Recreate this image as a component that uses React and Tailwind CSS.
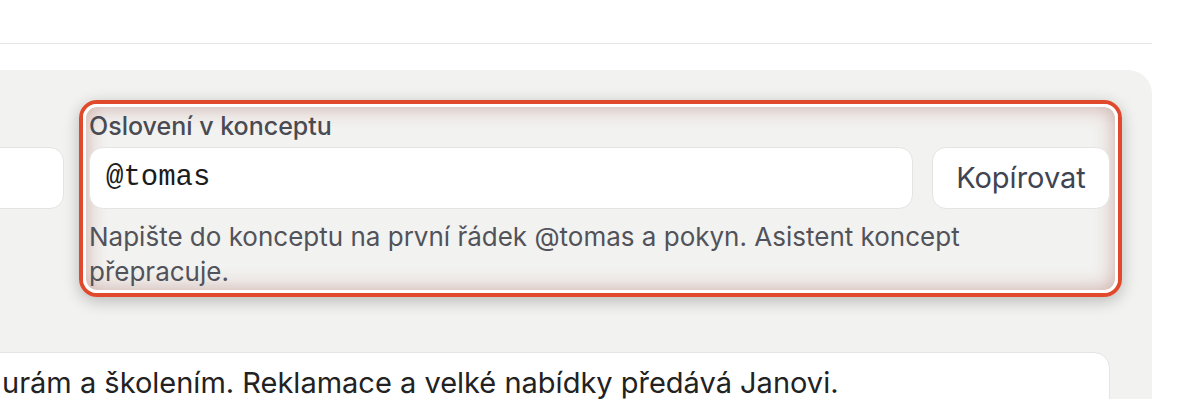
import React from 'react';

const font = { fontFamily: 'Inter, "Noto Sans", sans-serif' };

const App = () => {
    return (
        <div className="w-[1200px] h-[399px] overflow-hidden bg-white flex flex-col" style={font}>
            <div className="h-[44px] w-[1152px] shrink-0 border-b border-[#e7e7e5]" />

            <div className="mt-[26px] -ml-[400px] w-[1552px] shrink-0 bg-[#f2f2f0] rounded-tr-[24px] pl-[32px] pr-[30px] pt-[30px] flex flex-col">
                <div className="flex items-start gap-[15px]">
                    {/* left column, mostly out of view */}
                    <div className="w-[432px] shrink-0 pt-[47px]">
                        <div className="h-[62px] rounded-[14px] bg-white border border-[#e4e4e2]" />
                    </div>

                    {/* highlighted field */}
                    <div className="w-[1043px] shrink-0 rounded-[18px] border-[4px] border-[#e0492c] shadow-[0_4px_16px_rgba(0,0,0,0.24)]">
                        <div className="rounded-[14px] border-[3px] border-white shadow-[inset_0_0_20px_rgba(150,70,60,0.42)] pl-[3px] pr-[5px] pt-[3px] pb-[1px] flex flex-col">
                            <div className="text-[25px] leading-[32px] font-medium text-[#4a4a52]">Oslovení v konceptu</div>
                            <div className="mt-[5px] flex gap-[19px]">
                                <div className="flex-1 h-[62px] rounded-[14px] bg-white border border-[#e4e4e2] flex items-center px-[16px] text-[29px] text-[#1c1c1c]" style={{ fontFamily: '"Liberation Mono", "DejaVu Sans Mono", monospace' }}>
                                    @tomas
                                </div>
                                <button className="h-[62px] w-[178px] rounded-[14px] bg-white border border-[#e4e4e2] text-[29px] text-[#3f4452]">
                                    Kopírovat
                                </button>
                            </div>
                            <p className="mt-[10px] max-w-[900px] text-[26px] leading-[35px] text-[#52525a]">
                                Napište do konceptu na první řádek @tomas a pokyn. Asistent koncept přepracuje.
                            </p>
                        </div>
                    </div>
                </div>

                <div className="mt-[55px] ml-[352px] mr-[12px] h-[90px] rounded-t-[16px] bg-white border border-[#e4e4e2] pl-[17px] pt-[10px] text-[29px] leading-[40px] text-[#222] whitespace-nowrap">
                    urám a školením. Reklamace a velké nabídky předává Janovi.
                </div>
            </div>
        </div>
    );
};

export default App;
